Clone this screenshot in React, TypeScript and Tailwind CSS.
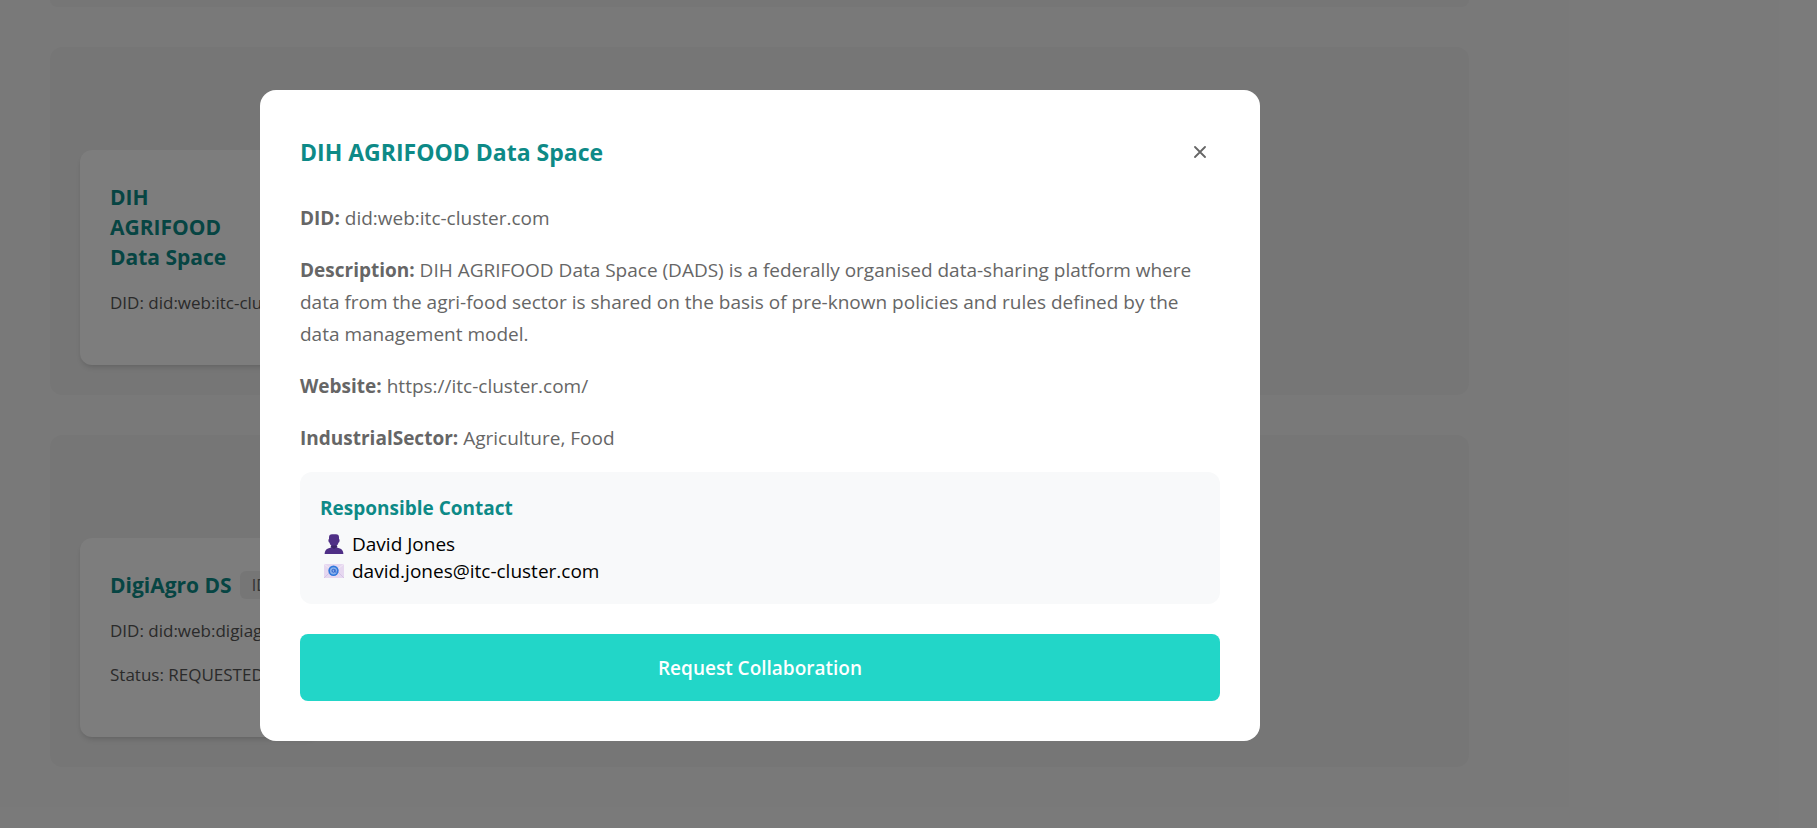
import React from "react";

function Detail({ label, children }: { label: string; children: React.ReactNode }) {
  return (
    <p className="text-[19px] leading-8 text-[#666]">
      <strong className="font-bold">{label}:</strong> {children}
    </p>
  );
}

function PersonIcon() {
  return (
    <svg viewBox="0 0 20 20" className="size-5" aria-hidden="true">
      <path
        d="M5 3.5Q5 .2 8 .2H12Q15 .2 15 3.500V5Q16 5.400 15.500 7.300Q15.200 8.500 14.600 8.500Q14 10.800 12.600 11.800V13Q13 13.800 16 14.500Q19.200 15.600 19.400 20H.6Q.8 15.600 4 14.500Q7 13.800 7.400 13V11.800Q6 10.800 5.400 8.500Q4.800 8.500 4.500 7.300Q4 5.400 5 5Z"
        fill="#4f2f86"
      />
      <path d="M6.500 12.500L10 15L13.500 12.500L12.500 11.500H7.500Z" fill="#3b2468" />
    </svg>
  );
}

function MailIcon() {
  return (
    <svg viewBox="0 0 20 20" className="size-5" aria-hidden="true">
      <path d="M0 3H20V17H0Z" fill="#e6d8f0" />
      <path d="M0 3L10 11L20 3" fill="none" stroke="#f3e8f6" strokeWidth="1" />
      <path d="M0 17L7 10M20 17L13 10" fill="none" stroke="#d5c3e6" strokeWidth="1" />
      <circle cx="9.500" cy="9.800" r="5.200" fill="#2f78dc" />
      <circle cx="9.500" cy="9.800" r="3.600" fill="#8bb0ea" />
      <circle cx="9.500" cy="9.800" r="1.500" fill="none" stroke="#2f62cc" strokeWidth="1" />
      <path d="M11 8.300V10.500Q11.300 11.600 12.400 11" fill="none" stroke="#2f62cc" strokeWidth="1" />
    </svg>
  );
}

function Card({ title, tag, lines }: { title: string; tag?: string; lines: string[] }) {
  return (
    <article className="w-60 rounded-xl bg-[#fafafa] px-[30px] pt-8 pb-[49px] shadow-md">
      <div className="flex items-center gap-2">
        <h3 className="max-w-[130px] text-[21px] leading-[30px] font-bold text-[#0d8a87]">{title}</h3>
        {tag && <span className="rounded-md bg-[#ececec] px-3 text-base leading-7 text-[#666]">{tag}</span>}
      </div>
      {lines.map((line) => (
        <p key={line} className="mt-[18px] text-[17px] leading-[26px] whitespace-nowrap text-[#555]">
          {line}
        </p>
      ))}
    </article>
  );
}

export default function App() {
  return (
    <div className="relative min-h-screen overflow-hidden bg-[#f5f5f5] font-['Open_Sans','Noto_Sans',sans-serif]">
      <main className="mr-[248px] flex flex-col gap-10 bg-[#f3f3f3] pr-[100px] pb-10 pl-[50px]">
        <section className="h-[7px] rounded-b-xl bg-[#ededed]" />
        <section className="rounded-xl bg-[#ededed] px-[30px] pt-[103px] pb-[30px]">
          <Card title="DIH AGRIFOOD Data Space" lines={["DID: did:web:itc-cluster.com"]} />
        </section>
        <section className="rounded-xl bg-[#ededed] px-[30px] pt-[103px] pb-[30px]">
          <Card title="DigiAgro DS" tag="IDS" lines={["DID: did:web:digiagro.eu", "Status: REQUESTED"]} />
        </section>
      </main>

      <div className="absolute inset-0 flex items-center justify-center bg-black/50 pt-0.5 pr-[297px]">
        <div role="dialog" aria-labelledby="dialog-title" className="w-[1000px] rounded-2xl bg-white p-10">
          <header className="flex items-center justify-between">
            <h2 id="dialog-title" className="text-[23px] leading-[44px] font-bold text-[#0d8a87]">
              DIH AGRIFOOD Data Space
            </h2>
            <button type="button" aria-label="Close" className="flex size-10 items-center justify-center text-[#666]">
              <svg viewBox="0 0 12 12" className="size-3" aria-hidden="true">
                <path d="M1 1L11 11M11 1L1 11" stroke="currentColor" strokeWidth="1.800" strokeLinecap="round" />
              </svg>
            </button>
          </header>

          <div className="mt-7 flex flex-col gap-5">
            <Detail label="DID">did:web:itc-cluster.com</Detail>
            <Detail label="Description">
              DIH AGRIFOOD Data Space (DADS) is a federally organised data-sharing platform where data from the
              agri-food sector is shared on the basis of pre-known policies and rules defined by the data management
              model.
            </Detail>
            <Detail label="Website">https://itc-cluster.com/</Detail>
            <Detail label="IndustrialSector">Agriculture, Food</Detail>
          </div>

          <section className="mt-[18px] rounded-xl bg-[#f8f9fa] px-5 pt-[21px] pb-[19px] text-[19px] text-black">
            <h3 className="mb-2 leading-[30px] font-bold text-[#0d8a87]">Responsible Contact</h3>
            <p className="flex items-center gap-2 pl-1 leading-[27px]">
              <PersonIcon /> David Jones
            </p>
            <p className="flex items-center gap-2 pl-1 leading-[27px]">
              <MailIcon /> david.jones@itc-cluster.com
            </p>
          </section>

          <button
            type="button"
            className="mt-[30px] w-full rounded-lg bg-[#22d6c8] pt-[21px] pb-[19px] text-[19px] leading-[27px] font-semibold text-white"
          >
            Request Collaboration
          </button>
        </div>
      </div>
    </div>
  );
}
